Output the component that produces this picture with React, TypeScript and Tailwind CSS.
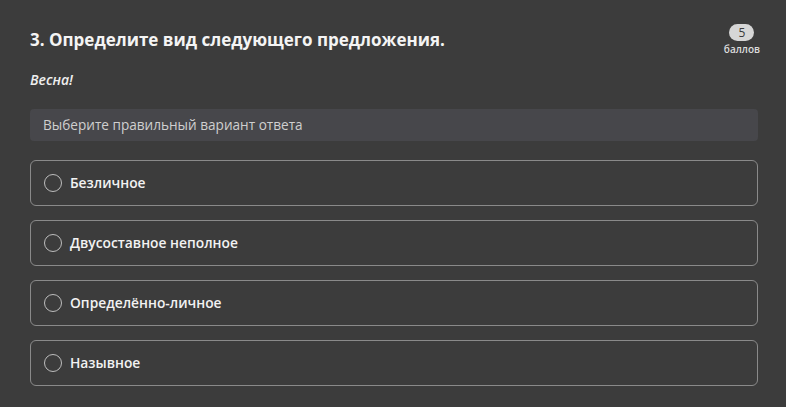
import { useState } from "react";

const options = [
  "Безличное",
  "Двусоставное неполное",
  "Определённо-личное",
  "Назывное",
];

export default function App() {
  const [selected, setSelected] = useState<number | null>(null);

  return (
    <div
      className="min-h-[407px] w-full bg-[#3c3c3c] pl-[30px] pr-[28px] pt-[22px] text-white"
      style={{ fontFamily: '"Open Sans", "Noto Sans", sans-serif' }}
    >
      {/* Header */}
      <div className="flex items-start justify-between">
        <h2 className="mt-[5px] text-[17px] font-bold leading-[26px] text-[#f4f4f4]">
          3. Определите вид следующего предложения.
        </h2>
        <div className="mr-[-2px] mt-[2px] flex flex-col items-center">
          <span className="flex h-[17px] w-[25px] items-center justify-center rounded-full bg-[#d6d6d6] text-[12px] leading-none text-[#3a3a3a]">
            5
          </span>
          <span className="mt-[2px] text-[10px] font-semibold leading-[12px] text-[#dcdcdc]">баллов</span>
        </div>
      </div>

      <p className="mt-[16px] text-[14px] font-semibold italic leading-[18px] text-[#eeeeee]">Весна!</p>

      <div className="mt-[20px] flex h-[32px] items-center rounded-[4px] bg-[#47474b] px-[13px] text-[13.6px] text-[#cfcfcf]">
        Выберите правильный вариант ответа
      </div>

      {/* Options */}
      <div className="mt-[19px] flex flex-col gap-[14px]">
        {options.map((opt, i) => (
          <button
            key={opt}
            onClick={() => setSelected(i)}
            className="flex h-[46px] items-center gap-[8px] rounded-[6px] border-[1.5px] border-[#8a8a8a] px-[13px] text-left"
          >
            <span className="flex h-[18px] w-[18px] items-center justify-center rounded-full border-[1.5px] border-[#bdbdbd]">
              {selected === i && <span className="h-[8px] w-[8px] rounded-full bg-white" />}
            </span>
            <span className="text-[13.8px] font-semibold text-[#f2f2f2]">{opt}</span>
          </button>
        ))}
      </div>
    </div>
  );
}
